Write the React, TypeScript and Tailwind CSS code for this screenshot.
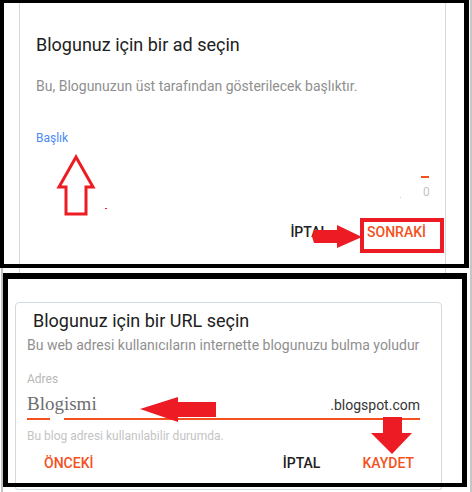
import React from "react";

export default function App() {
  return (
    <div
      className="relative w-[472px] h-[492px] bg-white overflow-hidden border-r-2 border-[#c6c6c6] text-[#212121]"
      style={{ fontFamily: "Roboto, 'Liberation Sans', sans-serif" }}
    >
      {/* Panel 1 */}
      <div className="w-[469px] h-[268px] border-black border-t-[3px] border-l-[4px] border-r-[5px] border-b-[4px]">
        <div className="ml-[15px] w-[427px] h-full border-x border-[#d3dadf] px-[16px] flex flex-col">
          <div className="mt-[30px] text-[18px] leading-[24px] text-[#212121]">Blogunuz için bir ad seçin</div>
          <div className="mt-[19px] text-[14px] leading-[20px] text-[#8f8f8f]">
            Bu, Blogunuzun üst tarafından gösterilecek başlıktır.
          </div>
          <div className="mt-[34px] text-[12px] leading-[16px] text-[#4a8af4]">Başlık</div>
          <div className="mt-[76px] flex justify-end gap-[39px] pr-[3px] text-[14px] leading-[20px] font-medium">
            <span className="text-[#212121]">İPTAL</span>
            <span className="text-[#f4511e]">SONRAKİ</span>
          </div>
        </div>
      </div>

      {/* Section 2 */}
      <div className="flex pl-[1px] h-[224px]">
        <div className="w-[2px] bg-[#c3c3c3]" />
        <div className="flex flex-col">
          <div className="h-[5px]">
            <div className="ml-[16px] w-[427px] h-full border-x border-[#d3dadf]" />
          </div>
          <div className="w-[464px] h-[214px] border-black border-t-[6px] border-l-[5px] border-r-[5px] border-b-[4px] overflow-hidden">
            <div className="ml-[7px] mt-[23px] w-[427px] h-[200px] border border-[#d3dadf] rounded-[4px] px-[11px] flex flex-col">
              <div className="mt-[6px] ml-[6px] text-[18px] leading-[24px] text-[#212121]">Blogunuz için bir URL seçin</div>
              <div className="mt-[2px] text-[14px] leading-[20px] text-[#8f8f8f] whitespace-nowrap">
                Bu web adresi kullanıcıların internette blogunuzu bulma yoludur
              </div>
              <div className="mt-[16px] text-[12px] leading-[16px] text-[#b8b8b8]">Adres</div>
              <div className="mt-[5px] w-[393px] flex items-baseline justify-between">
                <span
                  className="text-[19px] leading-[24px] text-[#6e6e6e]"
                  style={{ fontFamily: "'Liberation Serif', 'DejaVu Serif', serif" }}
                >
                  Blogismi
                </span>
                <span className="text-[14px] leading-[20px] text-[#333333]">.blogspot.com</span>
              </div>
              <div className="mt-[2px] w-[393px] h-[2px] flex">
                <div className="w-[23px] h-full bg-[#f4511e]" />
                <div className="ml-[14px] flex-1 h-full bg-[#f4511e]" />
              </div>
              <div className="mt-[8px] text-[12px] leading-[16px] text-[#c4c4c4]">
                Bu blog adresi kullanılabilir durumda.
              </div>
              <div className="mt-[9px] flex text-[14px] leading-[20px] font-medium pr-[16px]">
                <span className="ml-[17px] text-[#f4511e]">ÖNCEKİ</span>
                <span className="ml-auto text-[#212121]">İPTAL</span>
                <span className="ml-[42px] text-[#f4511e]">KAYDET</span>
              </div>
            </div>
          </div>
          <div className="h-[5px]">
            <div className="ml-[12px] w-[427px] h-[3px] border-x border-b border-[#d3dadf] rounded-b-[4px]" />
          </div>
        </div>
      </div>

      {/* Overlays: counter */}
      <div className="absolute left-[421px] top-[176px] w-[8px] h-[2px] bg-[#f4511e]" />
      <div className="absolute left-[423px] top-[184px] text-[12px] leading-[16px] text-[#c4c4c4]">0</div>
      <div className="absolute left-[400px] top-[197px] w-[1px] h-[1px] bg-[#cfcfcf]" />
      <div className="absolute left-[105px] top-[208px] w-[2px] h-[1px] bg-[#ed1c24]" />

      {/* Up arrow outline */}
      <svg className="absolute left-[56px] top-[154px]" width="40" height="63" viewBox="0 0 40 63">
        <polygon
          points="20,3 37,33 30,33 30,60 10,60 10,33 3,33"
          fill="none"
          stroke="#ed1c24"
          strokeWidth="3"
        />
      </svg>

      {/* Right arrow */}
      <svg className="absolute left-[312px] top-[225px]" width="50" height="23" viewBox="0 0 50 23">
        <polygon points="2,5 25,5 25,0 50,12 25,23 25,18 2,18 0,11.5" fill="#ed1c24" />
      </svg>

      {/* Red box */}
      <div className="absolute left-[360px] top-[218px] w-[84px] h-[35px] border-[4px] border-[#ed1c24]" />

      {/* Left arrow */}
      <svg className="absolute left-[140px] top-[397px]" width="76" height="25" viewBox="0 0 76 25">
        <polygon points="0,12 38,0 38,5 76,5 76,20 38,20 38,25" fill="#ed1c24" />
      </svg>

      {/* Down arrow */}
      <svg className="absolute left-[371px] top-[417px]" width="41" height="37" viewBox="0 0 41 37">
        <polygon points="12,0 31,0 31,16 41,16 21,37 0,16 12,16" fill="#ed1c24" />
      </svg>
    </div>
  );
}
